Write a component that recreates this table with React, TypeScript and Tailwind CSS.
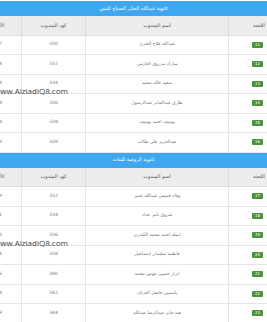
import React from 'react';

type Row = { lajna: string; name: string; code: string; num: string };

const schools: { title: string; rows: Row[] }[] = [
  {
    title: 'ثانوية عبدالله الجابر الصباح للبنين',
    rows: [
      { lajna: '11', name: 'عبدالله فلاح العنزي', code: '330', num: '327' },
      { lajna: '12', name: 'مبارك مرزوق العازمي', code: '332', num: '328' },
      { lajna: '13', name: 'سعيد خالد سعيد', code: '334', num: '328' },
      { lajna: '14', name: 'طارق عبدالجابر عبدالرسول', code: '336', num: '328' },
      { lajna: '15', name: 'يوسف احمد يوسف', code: '338', num: '328' },
      { lajna: '16', name: 'عبدالعزيز علي طالب', code: '339', num: '329' },
    ],
  },
  {
    title: 'ثانوية الروضة للبنات',
    rows: [
      { lajna: '17', name: 'وفاء خميس عبدالله خمير', code: '332', num: '329' },
      { lajna: '18', name: 'شروق ثامر حداد', code: '334', num: '331' },
      { lajna: '19', name: 'اميلة احمد محمد الكندري', code: '336', num: '333' },
      { lajna: '20', name: 'فاطمة سليمان إسماعيل', code: '338', num: '334' },
      { lajna: '21', name: 'ابرار حسين عوض محمد', code: '340', num: '336' },
      { lajna: '22', name: 'ياسمين فاضل العراف', code: '342', num: '338' },
      { lajna: '23', name: 'هبة جابر عبدالرضا عبدالله', code: '344', num: '339' },
    ],
  },
];

const font = { fontFamily: '"DejaVu Sans", "Liberation Sans", sans-serif' };

const SchoolTable: React.FC<{ title: string; rows: Row[] }> = ({ title, rows }) => (
  <div>
    {/* Title bar */}
    <div className="h-[15px] bg-[#3fa7ef] flex items-center justify-center text-white text-[5px]">
      {title}
    </div>

    {/* Header */}
    <div className="flex h-[19.5px] bg-[#ededed] border-b border-[#dcdcdc] text-[#555] text-[5px]">
      <div className="w-[38px] shrink-0 flex items-center justify-start pr-[2px]">اللجنة</div>
      <div className="w-[143px] shrink-0 flex items-center justify-center border-r border-[#dcdcdc]">اسم المندوب</div>
      <div className="w-[64px] shrink-0 flex items-center justify-center border-r border-[#dcdcdc]">كود المندوب</div>
      <div className="w-[48px] shrink-0 flex items-center justify-center border-r border-[#dcdcdc]">الأرقام</div>
    </div>

    {/* Rows */}
    {rows.map((r) => (
      <div key={r.lajna} className="flex h-[19.5px] bg-white border-b border-[#e6e6e6] text-[#777] text-[4.5px]">
        <div className="w-[38px] shrink-0 flex items-center justify-start pr-[4px]">
          <span className="w-[11px] h-[6px] bg-[#4a9339] text-white text-[4px] flex items-center justify-center rounded-[1px]">
            {r.lajna}
          </span>
        </div>
        <div className="w-[143px] shrink-0 flex items-center justify-center border-r border-[#e6e6e6]">{r.name}</div>
        <div className="w-[64px] shrink-0 flex items-center justify-center border-r border-[#e6e6e6]">{r.code}</div>
        <div className="w-[48px] shrink-0 flex items-center justify-center border-r border-[#e6e6e6]">{r.num}</div>
      </div>
    ))}
  </div>
);

export default function App() {
  return (
    <div className="relative w-[267px] h-[322px] overflow-hidden bg-white pt-px" dir="rtl" style={font}>
      {schools.map((s) => (
        <SchoolTable key={s.title} title={s.title} rows={s.rows} />
      ))}

      {/* Watermarks */}
      <div
        dir="ltr"
        className="absolute left-[-6px] top-[87px] text-[8px] text-[#3a3a3a] leading-none"
        style={{ fontFamily: '"Open Sans", "Liberation Sans", sans-serif' }}
      >
        www.AlziadiQ8.com
      </div>
      <div
        dir="ltr"
        className="absolute left-[-6px] top-[239px] text-[8px] text-[#3a3a3a] leading-none"
        style={{ fontFamily: '"Open Sans", "Liberation Sans", sans-serif' }}
      >
        www.AlziadiQ8.com
      </div>
    </div>
  );
}
